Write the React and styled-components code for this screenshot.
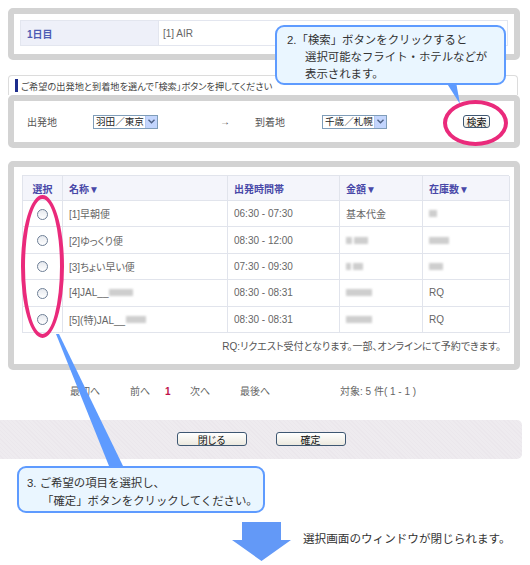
import React from "react";
import styled, { createGlobalStyle } from "styled-components";

const Global = createGlobalStyle`
  html, body {
    margin: 0;
    padding: 0;
    background: #fff;
  }
  body {
    font-family: "Liberation Sans", "Noto Sans CJK JP", sans-serif;
    color: #555;
  }
`;

const Page = styled.div`
  position: relative;
  width: 530px;
  height: 565px;
  padding-top: 8px;
  box-sizing: border-box;
  overflow: hidden;
  font-size: 10px;
  font-feature-settings: "palt";
`;

const Panel = styled.div`
  margin: ${(p) => p.$top || 0}px 10px 0 8px;
  border: 6px solid #d3d3d3;
  border-radius: 5px;
  background: #fff;
  padding: ${(p) => p.$pad};
  height: ${(p) => (p.$h ? p.$h + "px" : "auto")};
  box-sizing: border-box;
`;

const DayTable = styled.div`
  display: grid;
  grid-template-columns: 138px 1fr;
  height: 26px;
  border: 1px solid #e3e6ef;
  box-sizing: border-box;
`;

const DayCell = styled.div`
  display: flex;
  align-items: center;
  padding-left: ${(p) => (p.$head ? 6 : 4)}px;
  background: ${(p) => (p.$head ? "#eef0f9" : "#fff")};
  color: ${(p) => (p.$head ? "#4d5cb4" : "#666")};
  font-weight: ${(p) => (p.$head ? "bold" : "normal")};
  border-right: ${(p) => (p.$head ? "1px solid #e3e6ef" : "none")};
`;

const Heading = styled.div`
  margin: 15px 12px 0 8px;
  height: 20px;
  box-sizing: border-box;
  border: 1px solid #dcdcdc;
  border-bottom: none;
  border-radius: 4px 4px 0 0;
  display: flex;
  align-items: center;
  padding-left: 6px;
  color: #444;
  font-size: 9.2px;
`;

const Mark = styled.span`
  width: 3px;
  height: 13px;
  background: #1d2d8c;
  margin-right: 3px;
`;

const SearchRow = styled.div`
  display: grid;
  grid-template-columns: 66px 127px 35px 67px 141px auto;
  align-items: center;
  height: 100%;
  padding-left: 13px;
  color: #555;
`;

const Select = styled.div`
  width: 65px;
  height: 14px;
  border: 1px solid #7f9db9;
  box-sizing: border-box;
  display: flex;
  align-items: center;
  justify-content: space-between;
  padding-left: 2px;
  color: #222;
  font-size: 9.6px;
  line-height: 12px;
  white-space: nowrap;
  overflow: hidden;
  background: #fff;
`;

const SelArrow = styled.span`
  flex: none;
  width: 11px;
  height: 12px;
  background: #c3d5fd;
  border-left: 1px solid #b6c8ee;
  display: flex;
  align-items: center;
  justify-content: center;
`;

const SmallButton = styled.div`
  width: ${(p) => p.$w}px;
  height: ${(p) => p.$h}px;
  box-sizing: border-box;
  border: 1px solid #3e5772;
  border-radius: 3px;
  background: linear-gradient(#ffffff, #ece9df);
  display: flex;
  align-items: center;
  justify-content: center;
  color: #111;
  font-size: 10px;
`;

const ResultTable = styled.div`
  display: grid;
  grid-template-columns: 40px 165px 112px 83px 87px;
  border-top: 1px solid #e1e4ec;
  border-left: 1px solid #e1e4ec;
`;

const Th = styled.div`
  height: 25px;
  box-sizing: border-box;
  background: #f4f5fb;
  border-right: 1px solid #e1e4ec;
  border-bottom: 1px solid #e1e4ec;
  display: flex;
  align-items: center;
  justify-content: ${(p) => (p.$center ? "center" : "flex-start")};
  padding-left: ${(p) => (p.$center ? 0 : 6)}px;
  color: #4848a8;
  font-weight: bold;
`;

const Td = styled.div`
  height: 26.4px;
  box-sizing: border-box;
  border-right: 1px solid #e1e4ec;
  border-bottom: 1px solid #e1e4ec;
  display: flex;
  align-items: center;
  justify-content: ${(p) => (p.$center ? "center" : "flex-start")};
  padding-left: ${(p) => (p.$center ? 0 : 6)}px;
  color: #666;
`;

const Radio = styled.span`
  width: 9px;
  height: 9px;
  border-radius: 50%;
  border: 1px solid #6e7f96;
  background: linear-gradient(#e6e9ee, #fff);
  margin-top: 1px;
`;

const Blur = styled.span`
  display: inline-block;
  width: ${(p) => p.$w}px;
  height: 7px;
  margin-left: ${(p) => p.$ml || 0}px;
  background: #c9c9c9;
  filter: blur(1.2px);
  opacity: 0.9;
`;

const Note = styled.div`
  margin-top: 7px;
  text-align: right;
  padding-right: 8px;
  color: #555;
  line-height: 14px;
`;

const Pager = styled.div`
  margin-top: 15px;
  padding-left: 70px;
  display: grid;
  grid-template-columns: 60px 35px 25px 50px 100px auto;
  line-height: 14px;
  color: #666;
`;

const PageNo = styled.span`
  color: #c0134a;
  font-weight: bold;
`;

const ButtonBar = styled.div`
  margin: 21px 8px 0 0;
  height: 39px;
  border-radius: 0 5px 5px 0;
  background: repeating-linear-gradient(45deg, #eeebef 0 2px, #ebe7ec 2px 3px);
  display: flex;
  align-items: center;
  justify-content: center;
  gap: 29px;
`;

const Callout = styled.div`
  box-sizing: border-box;
  border: 2px solid #5e9bff;
  border-radius: 9px;
  background: #eaf6ff;
  color: #333;
  font-size: 11.4px;
  line-height: 17px;
  white-space: nowrap;
  font-feature-settings: normal;
`;

const TopCallout = styled(Callout)`
  position: absolute;
  left: 275px;
  top: 25px;
  width: 231px;
  height: 60px;
  padding: 5px 0 0 10px;
  z-index: 3;
`;

const BottomCallout = styled(Callout)`
  position: relative;
  margin: 7px 0 0 17px;
  width: 248px;
  height: 47px;
  padding: 6px 0 0 8px;
  line-height: 18px;
  z-index: 3;
`;

const Indent = styled.div`
  padding-left: ${(p) => p.$in}px;
`;

const Ring = styled.div`
  position: absolute;
  left: ${(p) => p.$x}px;
  top: ${(p) => p.$y}px;
  width: ${(p) => p.$w}px;
  height: ${(p) => p.$h}px;
  box-sizing: border-box;
  border: 4px solid #ea2a7b;
  border-radius: 50%;
  z-index: 2;
`;

const Tails = styled.svg`
  position: absolute;
  left: 0;
  top: 0;
  z-index: 2;
  pointer-events: none;
`;

const ArrowRow = styled.div`
  margin-top: 9px;
  padding-left: 232px;
  display: flex;
  align-items: flex-start;
  gap: 11px;
`;

const ArrowText = styled.div`
  margin-top: 10px;
  font-size: 11.6px;
  color: #333;
  line-height: 14px;
  font-feature-settings: normal;
`;

const rows = [
  { name: "[1]早朝便", time: "06:30 - 07:30", price: "基本代金", stock: <Blur $w={8} /> },
  { name: "[2]ゆっくり便", time: "08:30 - 12:00", price: <><Blur $w={6} /><Blur $w={14} $ml={2} /></>, stock: <Blur $w={20} /> },
  { name: "[3]ちょい早い便", time: "07:30 - 09:30", price: <><Blur $w={5} /><Blur $w={10} $ml={2} /></>, stock: <Blur $w={14} /> },
  { name: <>[4]JAL__<Blur $w={24} $ml={1} /></>, time: "08:30 - 08:31", price: <Blur $w={26} />, stock: "RQ" },
  { name: <>[5](特)JAL__<Blur $w={20} $ml={1} /></>, time: "08:30 - 08:31", price: <Blur $w={26} />, stock: "RQ" },
];

const Chevron = () => (
  <svg width="7" height="5" viewBox="0 0 7 5">
    <path d="M0.5 0.8 L3.5 3.8 L6.5 0.8" fill="none" stroke="#4d6185" strokeWidth="1.4" />
  </svg>
);

function App() {
  return (
    <>
      <Global />
      <Page>
        <Panel $pad="6px 6px 8px 6px">
          <DayTable>
            <DayCell $head>1日目</DayCell>
            <DayCell>[1] AIR</DayCell>
          </DayTable>
        </Panel>

        <Heading>
          <Mark />
          ご希望の出発地と到着地を選んで「検索」ボタンを押してください
        </Heading>
        <Panel $h={53} $pad="0">
          <SearchRow>
            <span>出発地</span>
            <Select>
              羽田／東京
              <SelArrow><Chevron /></SelArrow>
            </Select>
            <span>→</span>
            <span>到着地</span>
            <Select>
              千歳／札幌
              <SelArrow><Chevron /></SelArrow>
            </Select>
            <SmallButton $w={27} $h={13}>検索</SmallButton>
          </SearchRow>
        </Panel>

        <Panel $top={13} $pad="8px 5px 10px 8px">
          <ResultTable>
            <Th $center>選択</Th>
            <Th>名称▼</Th>
            <Th>出発時間帯</Th>
            <Th>金額▼</Th>
            <Th>在庫数▼</Th>
            {rows.map((r, i) => (
              <React.Fragment key={i}>
                <Td $center><Radio /></Td>
                <Td>{r.name}</Td>
                <Td>{r.time}</Td>
                <Td>{r.price}</Td>
                <Td>{r.stock}</Td>
              </React.Fragment>
            ))}
          </ResultTable>
          <Note>RQ:リクエスト受付となります。一部、オンラインにて予約できます。</Note>
        </Panel>

        <Pager>
          <span>最初へ</span>
          <span>前へ</span>
          <PageNo>1</PageNo>
          <span>次へ</span>
          <span>最後へ</span>
          <span>対象: 5 件( 1 - 1 )</span>
        </Pager>

        <ButtonBar>
          <SmallButton $w={70} $h={14}>閉じる</SmallButton>
          <SmallButton $w={70} $h={14}>確定</SmallButton>
        </ButtonBar>

        <BottomCallout>
          <div>3. ご希望の項目を選択し、</div>
          <Indent $in={15}>「確定」ボタンをクリックしてください。</Indent>
        </BottomCallout>

        <ArrowRow>
          <svg width="60" height="40" viewBox="0 0 60 40">
            <polygon points="10,0 49,0 49,18 59,18 29.5,39 0,18 10,18" fill="#6399f7" />
          </svg>
          <ArrowText>選択画面のウィンドウが閉じられます。</ArrowText>
        </ArrowRow>

        <TopCallout>
          <div>2.「検索」ボタンをクリックすると</div>
          <Indent $in={18}>選択可能なフライト・ホテルなどが</Indent>
          <Indent $in={18}>表示されます。</Indent>
        </TopCallout>

        <Tails width="530" height="565">
          <polygon points="446,82 456,82 460,104" fill="#5e9bff" />
          <polygon points="56,334 59,334 123,466 109,466" fill="#5e9bff" />
        </Tails>

        <Ring $x={443} $y={100} $w={65} $h={46} />
        <Ring $x={21} $y={195} $w={43} $h={143} />
      </Page>
    </>
  );
}

export default App;
